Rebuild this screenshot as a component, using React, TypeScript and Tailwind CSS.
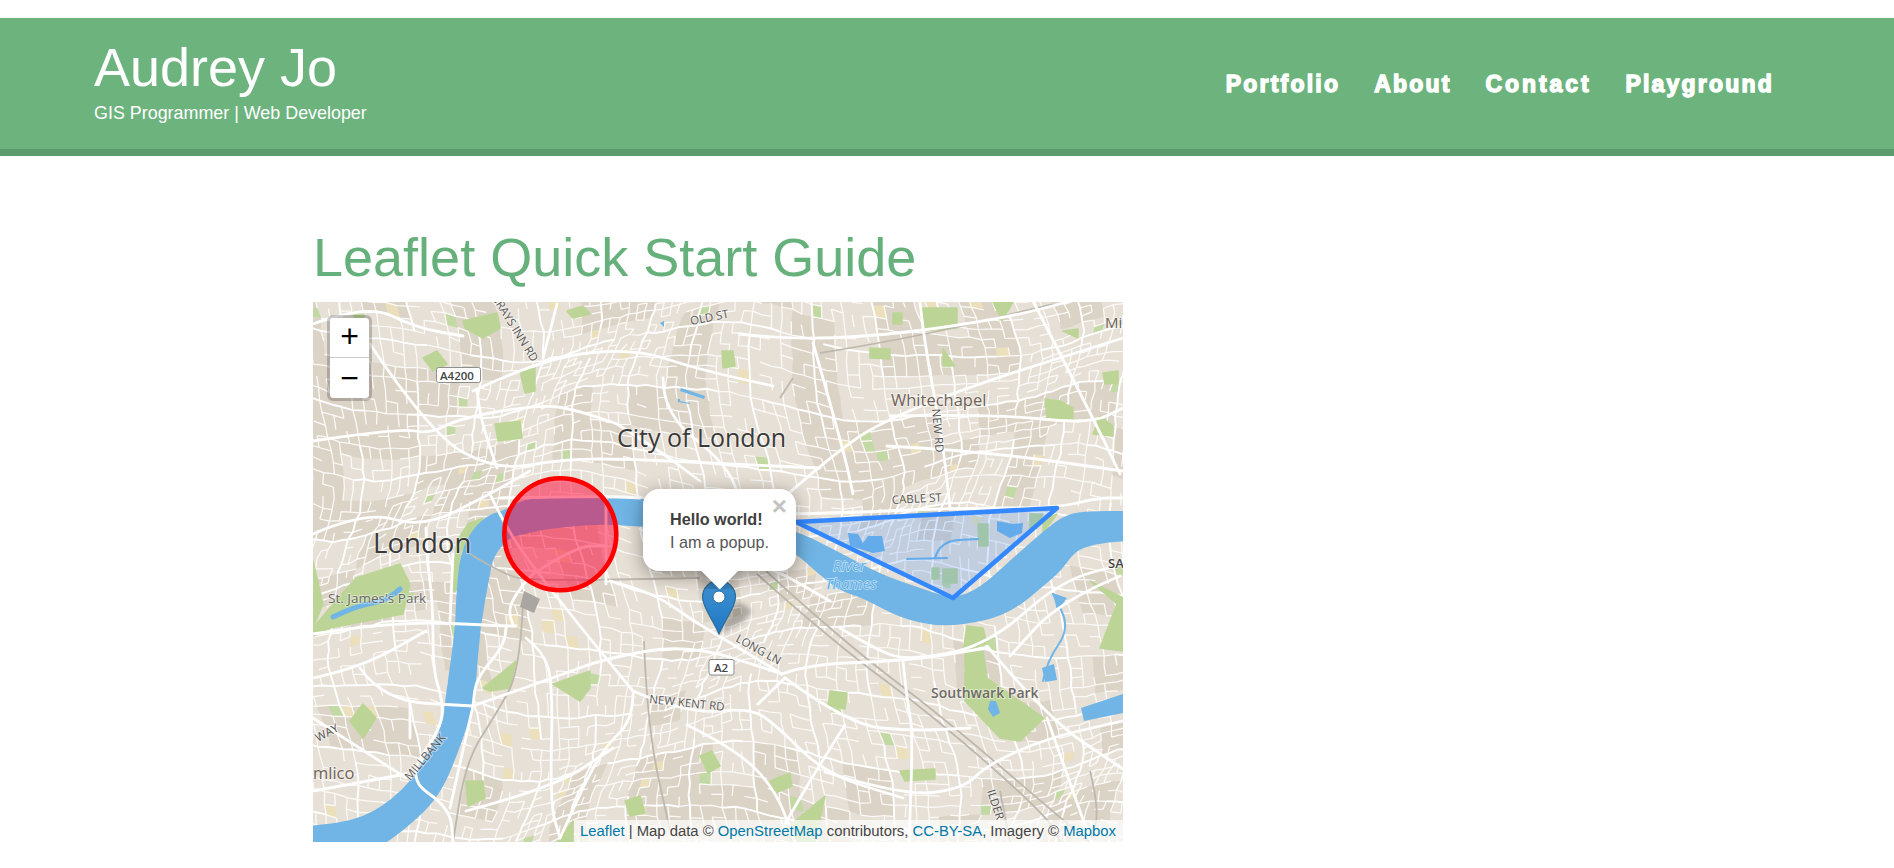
import { useMemo } from 'react';

type Pt = [number, number];

const smooth = (pts: Pt[], closed = false) => {
  if (pts.length < 3) return 'M' + pts.map(p => p.join(' ')).join('L');
  const mid = (a: Pt, b: Pt): Pt => [(a[0] + b[0]) / 2, (a[1] + b[1]) / 2];
  let d = closed ? `M${mid(pts[pts.length - 1], pts[0]).join(' ')}` : `M${pts[0].join(' ')}`;
  const end = closed ? pts.length : pts.length - 1;
  for (let i = closed ? 0 : 1; i < end; i++) {
    const m = mid(pts[i], pts[(i + 1) % pts.length]);
    d += `Q${pts[i].join(' ')} ${m.join(' ')}`;
  }
  if (!closed) d += `L${pts[pts.length - 1].join(' ')}`;
  return d + (closed ? 'Z' : '');
};

const poly = (pts: Pt[]) => 'M' + pts.map(p => p.join(' ')).join('L') + 'Z';

// the little streets are a warped grid, seeded so the picture stays the same
const buildStreets = () => {
  let seed = 20160;
  const rnd = () => {
    seed = (seed * 1664525 + 1013904223) % 4294967296;
    return seed / 4294967296;
  };
  const step = 10;
  const cols = 90;
  const rows = 64;
  const nodes: Pt[][] = [];
  for (let i = 0; i < cols; i++) {
    nodes[i] = [];
    for (let j = 0; j < rows; j++) {
      const bx = 285 + i * step;
      const by = 280 + j * step;
      const x = bx + 16 * Math.sin(by / 62 + i / 9) + 3 * Math.sin(by / 23) + (rnd() - 0.5) * 2.4;
      const y = by + 18 * Math.sin(bx / 71 + j / 7) + 3 * Math.cos(bx / 27) + (rnd() - 0.5) * 2.4;
      nodes[i][j] = [Math.round(x * 10) / 10, Math.round(y * 10) / 10];
    }
  }
  let streets = '';
  let mids = '';
  let blocks = '';
  let greens = '';
  let yellows = '';
  for (let i = 0; i < cols - 1; i++) {
    for (let j = 0; j < rows - 1; j++) {
      const a = nodes[i][j];
      const b = nodes[i + 1][j];
      const c = nodes[i + 1][j + 1];
      const d = nodes[i][j + 1];
      if (j % 6 === 0 && (i + j) % 19 > 3) mids += `M${a.join(' ')}L${b.join(' ')}`;
      else if (rnd() < (j % 3 === 0 ? 0.85 : 0.45)) streets += `M${a.join(' ')}L${b.join(' ')}`;
      if (i % 6 === 0 && (i + j) % 17 > 3) mids += `M${a.join(' ')}L${d.join(' ')}`;
      else if (rnd() < (i % 3 === 0 ? 0.85 : 0.45)) streets += `M${a.join(' ')}L${d.join(' ')}`;
      // darker ground comes in patches a few cells wide
      const hash = Math.sin((i >> 2) * 12.9898 + (j >> 2) * 78.233) * 43758.5453;
      const patch = hash - Math.floor(hash);
      const r = rnd();
      if (patch < (a[1] < 600 ? 0.45 : 0.22)) blocks += poly([a, b, c, d]);
      if (r > 0.992) greens += poly([a, b, c, d]);
      else if (r > 0.98) yellows += poly([a, b, c, d]);
    }
  }
  return { streets, mids, blocks, greens, yellows };
};

const river: Pt[] = [
  [300, 825], [313, 825], [363, 818], [403, 790], [426, 757], [443, 723], [445, 700], [455, 630], [456, 597], [460, 553], [473, 527],
  [490, 513], [503, 510], [517, 502], [530, 497], [603, 497], [645, 498], [700, 500], [797, 530], [837, 550], [880, 573], [920, 587],
  [953, 598], [980, 587], [1013, 557], [1047, 527], [1067, 513], [1090, 510], [1123, 510], [1140, 510], [1140, 540], [1123, 540],
  [1095, 543], [1075, 550], [1061, 570], [1041, 587], [1017, 607], [987, 620], [940, 626], [900, 617], [863, 597], [840, 590],
  [815, 570], [797, 553], [760, 535], [700, 527], [643, 526], [603, 523], [553, 527], [523, 533], [507, 538], [493, 557], [490, 573],
  [480, 627], [476, 683], [473, 700], [470, 717], [456, 757], [443, 787], [426, 810], [390, 840], [370, 850], [300, 850],
];

const docks: Pt[][] = [
  [[848, 532], [858, 533], [863, 542], [868, 535], [882, 535], [885, 550], [873, 552], [850, 545]],
  [[997, 520], [1013, 523], [1023, 522], [1022, 532], [1010, 537], [997, 530]],
  [[1081, 707], [1123, 693], [1123, 712], [1084, 720]],
  [[1042, 667], [1054, 663], [1057, 679], [1045, 681]],
  [[1053, 592], [1067, 597], [1057, 610]],
  [[660, 322], [664, 320], [664, 326]],
  [[990, 700], [996, 700], [1000, 712], [993, 716], [988, 708]],
  [[681, 387], [705, 395], [704, 398], [680, 390]],
  [[678, 398], [680, 398], [680, 400], [690, 402], [690, 403], [678, 401]],
];

const parks: Pt[][] = [
  [[330, 627], [403, 613], [410, 583], [400, 563], [356, 577], [333, 603], [313, 627], [313, 635]],
  [[313, 560], [323, 603], [313, 627]],
  [[483, 517], [468, 523], [457, 540], [451, 590], [456, 590], [461, 550]],
  [[483, 687], [516, 660], [510, 687], [490, 690]],
  [[553, 683], [590, 670], [590, 687], [580, 700]],
  [[350, 720], [363, 703], [376, 717], [363, 737]],
  [[466, 780], [483, 780], [485, 797], [468, 805]],
  [[558, 841], [573, 820], [573, 841]],
  [[965, 650], [983, 650], [987, 677], [1044, 717], [1020, 740], [1000, 737], [965, 700]],
  [[967, 625], [983, 627], [987, 643], [963, 650]],
  [[1090, 580], [1123, 597], [1123, 650], [1100, 647], [1117, 603]],
  [[978, 523], [988, 523], [988, 545], [979, 545]],
  [[932, 567], [939, 567], [939, 578], [932, 578]],
  [[943, 568], [957, 568], [957, 582], [943, 582]],
  [[1030, 513], [1043, 513], [1037, 527], [1030, 528]],
  [[1043, 520], [1057, 513], [1043, 532]],
  [[463, 320], [497, 312], [500, 327], [483, 337], [465, 327]],
  [[423, 357], [437, 350], [447, 363], [433, 370]],
  [[495, 423], [520, 420], [522, 437], [498, 440]],
  [[520, 370], [535, 367], [535, 390], [525, 392]],
  [[722, 350], [733, 350], [735, 365], [723, 367]],
  [[567, 310], [583, 305], [590, 313], [573, 317]],
  [[920, 307], [957, 307], [957, 327], [923, 330]],
  [[993, 301], [1013, 301], [1002, 320]],
  [[1045, 398], [1060, 400], [1073, 407], [1073, 420], [1047, 417]],
  [[1103, 372], [1118, 370], [1118, 382], [1105, 383]],
  [[893, 312], [902, 312], [902, 323], [893, 323]],
  [[870, 347], [890, 348], [890, 358], [870, 357]],
  [[943, 348], [955, 365], [943, 365]],
  [[1063, 330], [1078, 328], [1078, 337]],
  [[1100, 415], [1113, 425], [1113, 435], [1093, 433]],
  [[830, 690], [847, 692], [845, 708], [828, 704]],
  [[700, 755], [712, 750], [720, 765], [708, 772]],
  [[770, 780], [790, 772], [792, 785], [775, 792]],
  [[795, 820], [825, 795], [815, 841], [790, 841]],
  [[625, 800], [640, 795], [645, 812], [630, 815]],
  [[900, 770], [935, 768], [935, 778], [905, 780]],
];

const roads: Pt[][] = [
  [[313, 440], [400, 427], [430, 433], [460, 417], [543, 403], [580, 410], [617, 423]],
  [[473, 390], [543, 357], [633, 347], [697, 368], [773, 385]],
  [[313, 323], [367, 303], [417, 327], [463, 335]],
  [[370, 343], [430, 433], [497, 470], [563, 458], [633, 458], [727, 463], [820, 467]],
  [[477, 390], [480, 417], [497, 467]],
  [[557, 303], [543, 357]],
  [[663, 377], [663, 413], [727, 463], [743, 507]],
  [[617, 423], [660, 450], [700, 480]],
  [[780, 500], [840, 447], [890, 417], [980, 382], [1123, 337]],
  [[813, 342], [843, 447], [853, 493]],
  [[887, 445], [980, 450], [1123, 470]],
  [[920, 300], [923, 333], [943, 443], [950, 507]],
  [[890, 415], [993, 413], [1090, 423], [1123, 407]],
  [[1033, 300], [1093, 417], [1120, 473]],
  [[780, 513], [845, 512], [950, 507], [1057, 507], [1097, 497], [1123, 497]],
  [[740, 333], [813, 342], [1000, 320], [1123, 285]],
  [[840, 627], [873, 647], [907, 660], [987, 645], [1060, 580], [1123, 563]],
  [[987, 645], [1047, 717], [1123, 768]],
  [[903, 660], [907, 700], [913, 730], [909, 841]],
  [[785, 677], [849, 724], [913, 730], [970, 727]],
  [[633, 690], [687, 713], [750, 707], [775, 723], [825, 773], [903, 797]],
  [[785, 677], [758, 703]],
  [[782, 673], [808, 663], [906, 660], [987, 647]],
  [[633, 693], [633, 720], [600, 750], [560, 837]],
  [[687, 724], [734, 747], [775, 787], [795, 841]],
  [[845, 724], [815, 771], [781, 830]],
  [[825, 771], [903, 795], [963, 788], [987, 764], [1047, 737], [1123, 720]],
  [[1047, 717], [1091, 841]],
  [[313, 533], [366, 510], [423, 527], [490, 493], [530, 470]],
  [[490, 493], [506, 527], [536, 570], [600, 650], [633, 690]],
  [[426, 527], [426, 550], [433, 603], [433, 670], [443, 700], [441, 727], [406, 777], [450, 807], [453, 841]],
  [[313, 633], [393, 620], [506, 625], [516, 625]],
  [[453, 553], [450, 620]],
  [[313, 677], [360, 667], [426, 630]],
  [[360, 667], [383, 700], [473, 705]],
  [[473, 705], [450, 807]],
  [[473, 705], [553, 677], [606, 657], [690, 643], [782, 673]],
  [[506, 627], [506, 643], [476, 677], [473, 705]],
  [[513, 623], [506, 610], [523, 583], [536, 570]],
  [[313, 717], [406, 777]],
  [[410, 700], [410, 737]],
  [[313, 790], [406, 773]],
  [[466, 810], [553, 787], [613, 747]],
  [[526, 637], [543, 650], [553, 683], [550, 803], [560, 837]],
  [[500, 497], [606, 495], [640, 497]],
  [[606, 497], [606, 583]],
  [[533, 573], [576, 545], [606, 545]],
  [[694, 620], [782, 673]],
  [[640, 528], [690, 560], [760, 560], [830, 600]],
  [[1120, 575], [1060, 600], [1010, 655]],
  [[610, 580], [650, 590], [694, 620]],
];

const rails: Pt[][] = [
  [[820, 352], [913, 337], [1053, 303]],
  [[780, 397], [793, 377]],
  [[757, 573], [832, 640], [936, 717], [1047, 815], [1060, 841]],
  [[766, 570], [840, 638], [944, 717], [1058, 815], [1090, 841]],
  [[644, 640], [647, 724], [670, 830]],
  [[523, 603], [520, 670], [496, 713], [466, 760], [453, 841]],
  [[470, 553], [503, 573], [530, 580], [700, 577]],
  [[1000, 790], [1010, 841]],
  [[1090, 770], [1100, 810], [1090, 841]],
];

const canals: Pt[][] = [
  [[333, 616], [356, 605], [385, 600], [400, 588]],
  [[1043, 680], [1047, 660], [1070, 627], [1053, 593]],
  [[907, 558], [947, 557]],
  [[935, 557], [940, 540], [978, 538]],
];

const labels = [
  { t: 'City of London', x: 617, y: 446, s: 25, f: '#3a3a3a', w: 500, r: 0 },
  { t: 'London', x: 373, y: 552, s: 27.6, f: '#3a3a3a', w: 500, r: 0 },
  { t: "St. James's Park", x: 328, y: 602, s: 13.5, f: '#666666', w: 500, r: 0 },
  { t: 'Whitechapel', x: 891, y: 405, s: 16.5, f: '#6e6357', w: 400, r: 0 },
  { t: 'Southwark Park', x: 931, y: 697, s: 14, f: '#6e6a64', w: 600, r: 0 },
  { t: 'mlico', x: 313, y: 778, s: 16.5, f: '#6e6357', w: 400, r: 0 },
  { t: 'Mil', x: 1105, y: 327, s: 15, f: '#6e6357', w: 400, r: 0 },
  { t: 'SA', x: 1108, y: 567, s: 13, f: '#444444', w: 600, r: 0 },
  { t: 'NEW RD', x: 932, y: 408, s: 11.5, f: '#555555', w: 500, r: 85 },
  { t: 'CABLE ST', x: 892, y: 503, s: 11.5, f: '#555555', w: 500, r: -3 },
  { t: 'OLD ST', x: 691, y: 324, s: 11.5, f: '#555555', w: 500, r: -11 },
  { t: 'GRAYS INN RD', x: 491, y: 296, s: 11.5, f: '#555555', w: 500, r: 58 },
  { t: 'LONG LN', x: 735, y: 640, s: 11.5, f: '#555555', w: 500, r: 29 },
  { t: 'NEW KENT RD', x: 649, y: 702, s: 11.5, f: '#555555', w: 500, r: 6 },
  { t: 'MILLBANK', x: 410, y: 780, s: 11.5, f: '#555555', w: 500, r: -50 },
  { t: 'WAY', x: 318, y: 741, s: 11.5, f: '#555555', w: 500, r: -28 },
  { t: 'ILDER', x: 987, y: 790, s: 11.5, f: '#555555', w: 500, r: 72 },
];

const LondonMap = () => {
  const net = useMemo(buildStreets, []);
  return (
    <svg viewBox="313 301 810 540" className="block w-full h-full font-['Open_Sans',sans-serif]">
      <defs>
        <filter id="soft">
          <feGaussianBlur stdDeviation="0.4" />
        </filter>
        <filter id="pinShadow">
          <feGaussianBlur stdDeviation="2.5" />
        </filter>
        <linearGradient id="pin" x1="0" y1="0" x2="0" y2="1">
          <stop offset="0" stopColor="#3f93d4" />
          <stop offset="1" stopColor="#2077c2" />
        </linearGradient>
      </defs>

      <g filter="url(#soft)">
        <rect x="300" y="290" width="840" height="560" fill="#e7e0d6" />
        <path d={net.blocks} fill="#dcd3c7" />
        <path d={net.yellows} fill="#ebe0bb" />
        <path d={net.greens} fill="#c3d9a4" />
        <path d={net.streets} fill="none" stroke="#fcfaf8" strokeWidth="1.25" />
        <path d={net.mids} fill="none" stroke="#ffffff" strokeWidth="1.9" />
        {parks.map((p, i) => (
          <path key={i} d={poly(p)} fill="#bcd596" stroke="#bcd596" strokeWidth="1.5" strokeLinejoin="round" />
        ))}
        <path d={smooth(river, true)} fill="#70b5e6" />
        {docks.map((p, i) => (
          <path key={i} d={poly(p)} fill="#70b5e6" />
        ))}
        {canals.map((p, i) => (
          <path key={i} d={smooth(p)} fill="none" stroke="#70b5e6" strokeWidth={i === 0 ? 5 : 2} strokeLinecap="round" />
        ))}
        {rails.map((p, i) => (
          <path key={i} d={smooth(p)} fill="none" stroke="#bdb7ae" strokeWidth="1.8" />
        ))}
        {roads.map((p, i) => (
          <path key={i} d={smooth(p)} fill="none" stroke="#ffffff" strokeWidth="2.8" strokeLinecap="round" />
        ))}
        <path d={poly([[524, 590], [540, 598], [534, 612], [520, 606]])} fill="#a9a6a2" />
      </g>

      {labels.map(l => (
        <text
          key={l.t}
          x={l.x}
          y={l.y}
          fontSize={l.s}
          fontWeight={l.w}
          fill={l.f}
          stroke="#ffffff"
          strokeOpacity="0.45"
          strokeWidth="2"
          paintOrder="stroke"
          transform={l.r ? `rotate(${l.r} ${l.x} ${l.y})` : undefined}
        >
          {l.t}
        </text>
      ))}

      <g fontStyle="italic" fontSize="15" fill="#62ade3" stroke="#c5e2f6" strokeWidth="1.3" paintOrder="stroke">
        <text x="833" y="570">River</text>
        <text x="825" y="588">Thames</text>
      </g>

      <g fontSize="11.5" fontWeight="600" fill="#444444">
        <rect x="436.5" y="366.5" width="44" height="15" rx="2" fill="#ffffff" stroke="#8f8f8f" />
        <text x="440" y="378.5">A4200</text>
        <rect x="709" y="658.5" width="25" height="15.5" rx="2" fill="#ffffff" stroke="#8f8f8f" />
        <text x="714" y="671">A2</text>
      </g>

      {/* layers drawn over the tiles */}
      <path d="M1057 507L953 597L796 521Z" fill="#3388ff" fillOpacity="0.2" stroke="#3388ff" strokeWidth="4.6" strokeLinejoin="round" />
      <circle cx="560.3" cy="533.3" r="56" fill="#ff0033" fillOpacity="0.5" stroke="#ff0000" strokeWidth="4.6" />

      <path d="M719 633L742 622L752 610L742 602L730 606Z" fill="#000000" fillOpacity="0.26" filter="url(#pinShadow)" />
      <path
        d="M719 633C712 617 702.5 606 702.5 596A16.5 16.5 0 0 1 735.5 596C735.5 606 726 617 719 633Z"
        fill="url(#pin)"
        stroke="#2e6c97"
        strokeWidth="1.2"
      />
      <circle cx="719" cy="596" r="6" fill="#ffffff" stroke="#2e6c97" strokeWidth="1" />
    </svg>
  );
};

export default function App() {
  return (
    <div className="bg-white pt-[18px] font-['Liberation_Sans',Arial,sans-serif]">
      <header className="h-[138px] bg-[#6cb37d] border-b-[7px] border-[#5c9b6c] flex items-center justify-between pl-[94px] pr-[120px] text-white">
        <div className="mt-[-8px]">
          <h1 className="text-[54px] leading-[62px]">Audrey Jo</h1>
          <p className="text-[17.9px] leading-[21px] mt-[5px]">GIS Programmer | Web Developer</p>
        </div>
        <nav className="flex gap-[34px] text-[23px] font-bold tracking-[2.2px] [-webkit-text-stroke:1.4px_white] mt-[2px]">
          <a>Portfolio</a>
          <a>About</a>
          <a className="tracking-[2.9px]">Contact</a>
          <a>Playground</a>
        </nav>
      </header>

      <main className="pl-[313px] pt-[69px]">
        <h2 className="text-[54px] leading-[64px] text-[#66b07c] mb-[13px]">Leaflet Quick Start Guide</h2>
        <div className="relative w-[810px] h-[540px] overflow-hidden">
          <LondonMap />

          {/* zoom buttons */}
          <div className="absolute left-[14px] top-[13px] w-[45px] rounded-[6px] border-[3px] border-[#00000033] bg-clip-padding">
            <div className="h-[40px] bg-white rounded-t-[4px] border-b border-[#cccccc] flex items-center justify-center text-[32px] leading-none text-black pb-[3px]">+</div>
            <div className="h-[40px] bg-white rounded-b-[4px] flex items-center justify-center text-[32px] leading-none text-black">−</div>
          </div>

          {/* popup */}
          <div className="absolute left-[330px] top-[187px] w-[153px] h-[82px] bg-white rounded-[16px] shadow-[0_4px_19px_rgba(0,0,0,0.4)] pl-[27px] pt-[19px] text-[16.2px] leading-[22.7px] text-[#555555]">
            <b className="text-[#404040]">Hello world!</b>
            <div>I am a popup.</div>
            <span className="absolute right-[9px] top-[4px] text-[26px] leading-[26px] font-bold text-[#c3c3c3]">×</span>
            <div className="absolute left-[54px] top-full w-[46px] h-[18px] overflow-hidden">
              <div className="w-[25.5px] h-[25.5px] bg-white rotate-45 mx-auto mt-[-13px] shadow-[0_4px_19px_rgba(0,0,0,0.4)]"></div>
            </div>
          </div>

          {/* attribution */}
          <div className="absolute right-0 bottom-0 h-[22px] bg-[#ffffffb3] pl-[6px] pr-[7px] text-[14.85px] leading-[22px] text-[#444444] whitespace-nowrap">
            <a className="text-[#0078a8]">Leaflet</a> | Map data © <a className="text-[#0078a8]">OpenStreetMap</a> contributors, <a className="text-[#0078a8]">CC-BY-SA</a>, Imagery © <a className="text-[#0078a8]">Mapbox</a>
          </div>
        </div>
      </main>
    </div>
  );
}
